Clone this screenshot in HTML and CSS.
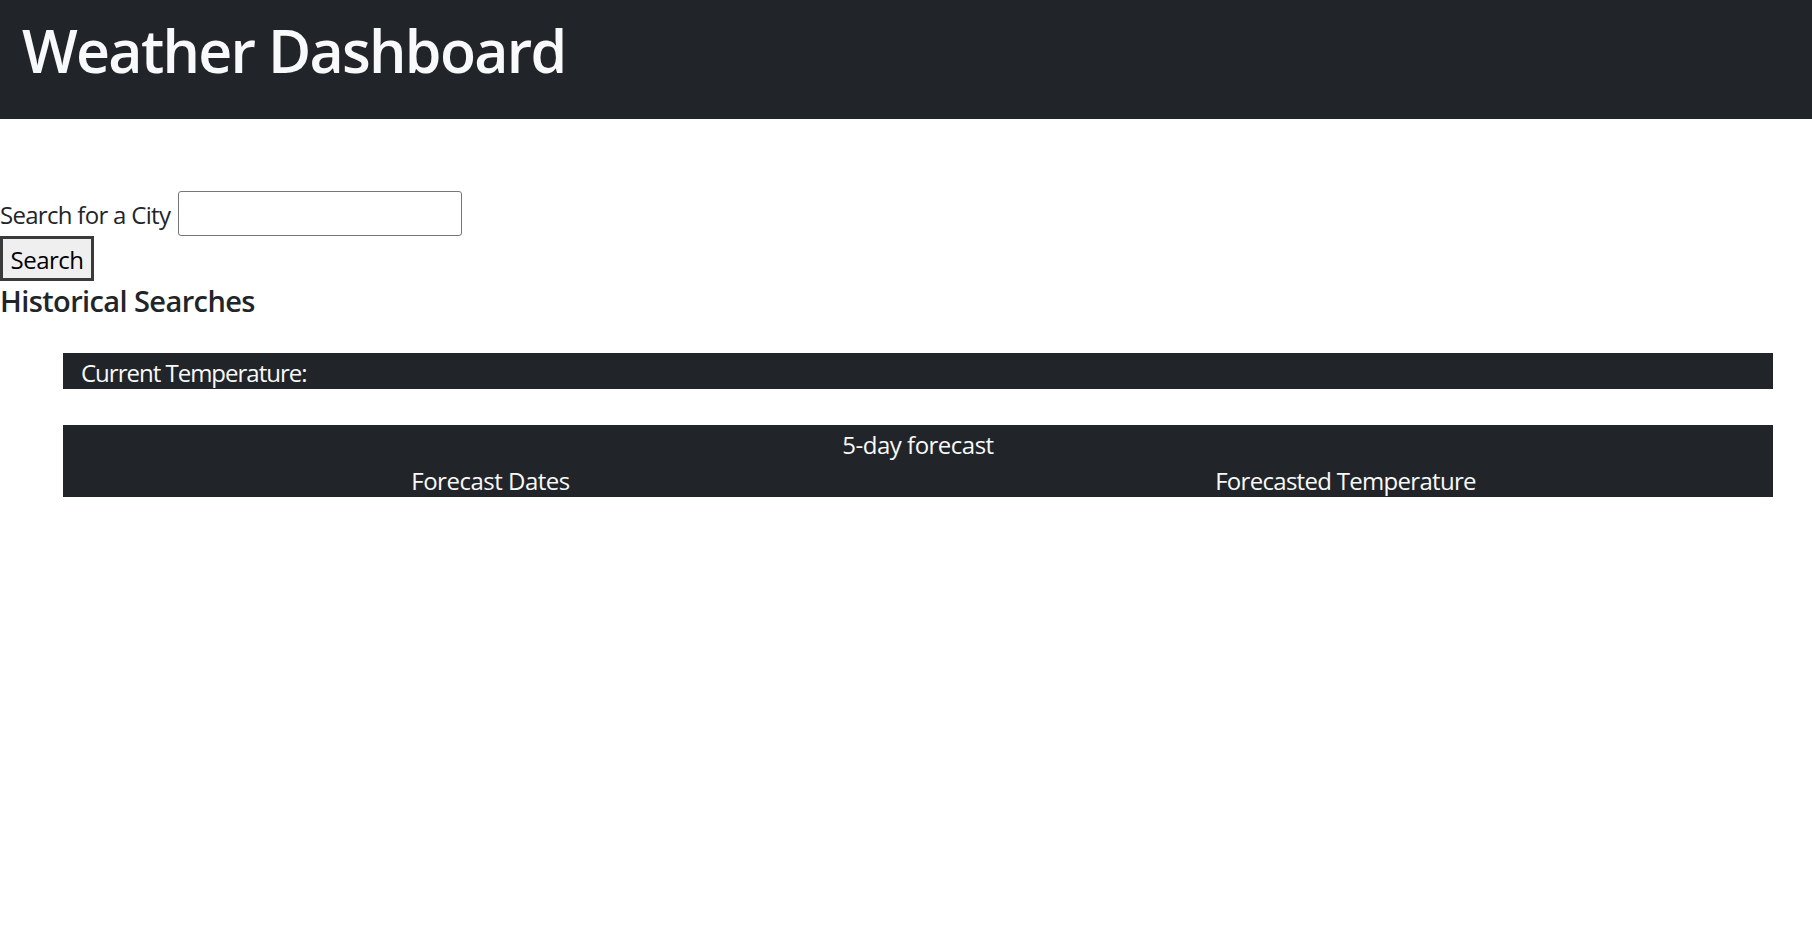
FILE: index.html
```html
<!DOCTYPE html>
<html lang="en">
<head>
<meta charset="utf-8">
<title>Weather Dashboard</title>
<link rel="stylesheet" href="styles.css">
</head>
<body>
<header class="topbar">
  <h1 class="title">Weather Dashboard</h1>
</header>
<main class="content">
  <form class="search">
    <div class="search-row">
      <label class="search-label" for="city">Search for a City</label>
      <input class="search-input" id="city" type="text">
    </div>
    <button class="search-btn" type="button">Search</button>
  </form>
  <h5 class="history-title">Historical Searches</h5>
  <section class="panels">
    <div class="current">Current Temperature:</div>
    <div class="forecast">
      <div class="forecast-head">5-day forecast</div>
      <div class="forecast-cols">
        <div class="forecast-col">Forecast Dates</div>
        <div class="forecast-col">Forecasted Temperature</div>
      </div>
    </div>
  </section>
</main>
</body>
</html>
```
FILE: styles.css
```css
* { box-sizing: border-box; }
body {
  margin: 0;
  font-family: "Open Sans", "Noto Sans", sans-serif;
  font-size: 24px;
  line-height: 36px;
  color: #212529;
  background: #fff;
}
.topbar {
  background: #212529;
  height: 119px;
  padding: 14px 22px 0;
}
.title {
  margin: 0;
  font-size: 59px;
  font-weight: 600;
  line-height: 72px;
  color: #f8f9fa;
  letter-spacing: -1.7px;
}
.content {
  padding-top: 72px;
}
.search { margin: 0; }
.search-row {
  display: flex;
  align-items: center;
  gap: 8px;
  height: 45px;
  padding-top: 2px;
}
.search-label { letter-spacing: -0.7px; }
.search-input {
  width: 284px;
  height: 45px;
  margin-top: -2px;
  border: 1px solid #767676;
  border-radius: 3px;
  font: inherit;
  padding: 2px 3px;
}
.search-btn {
  display: block;
  width: 94px;
  height: 45px;
  margin: 0;
  padding: 2px 0 0;
  border: 3px solid #3a3a3a;
  background: #efefef;
  font: inherit;
  color: #000;
  letter-spacing: -0.5px;
}
.history-title {
  margin: 0;
  padding-top: 2px;
  font-size: 29px;
  font-weight: 600;
  line-height: 36px;
  letter-spacing: -0.6px;
}
.panels {
  margin: 34px 0 0 63px;
  width: 1710px;
  display: flex;
  flex-direction: column;
  gap: 36px;
  color: #f8f9fa;
}
.current {
  background: #212529;
  height: 36px;
  padding: 2px 18px 0;
  letter-spacing: -1px;
}
.forecast {
  background: #212529;
  letter-spacing: -0.5px;
  padding-top: 2px;
  height: 72px;
}
.forecast-head { text-align: center; height: 36px; }
.forecast-cols { display: flex; height: 34px; }
.forecast-col { flex: 1; text-align: center; }
.forecast-col + .forecast-col { letter-spacing: -0.7px; }
```
